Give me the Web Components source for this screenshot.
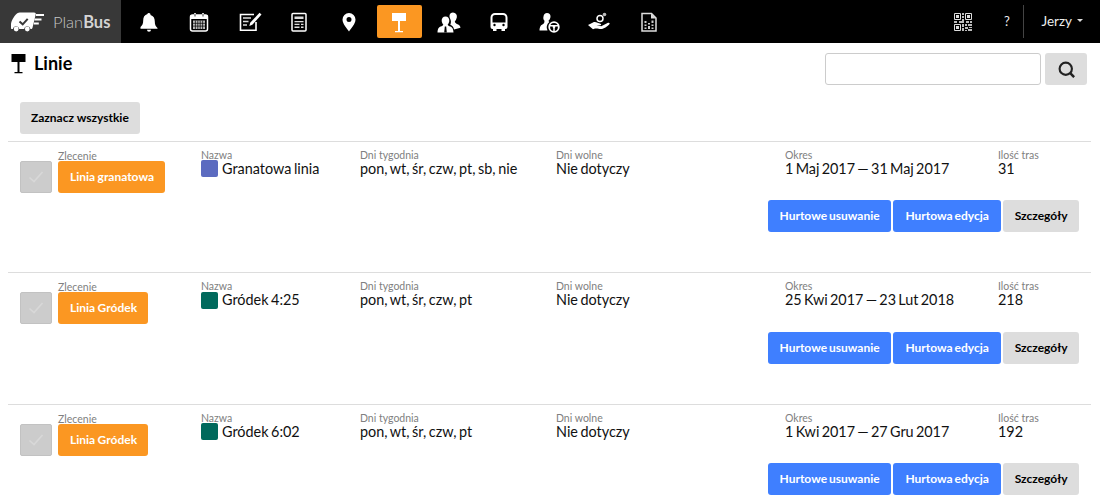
<!DOCTYPE html>
<html lang="pl"><head><meta charset="utf-8"><title>Linie</title>
<style>
html,body{margin:0;padding:0;background:#fff;font-family:Lato,"Liberation Sans",sans-serif;color:#000}
</style></head><body>
<pb-topbar></pb-topbar>
<pb-page-header></pb-page-header>
<pb-toolbar><pb-btn kind="gray" style="word-spacing:0;padding:0 11px">Zaznacz wszystkie</pb-btn></pb-toolbar>
<pb-list>
<pb-line order="Linia granatowa" name="Granatowa linia" color="#5c6bc0" days="pon, wt, śr, czw, pt, sb, nie" off="Nie dotyczy" period="1 Maj 2017 — 31 Maj 2017" count="31"></pb-line>
<pb-line order="Linia Gródek" name="Gródek 4:25" color="#00695c" days="pon, wt, śr, czw, pt" off="Nie dotyczy" period="25 Kwi 2017 — 23 Lut 2018" count="218"></pb-line>
<pb-line order="Linia Gródek" name="Gródek 6:02" color="#00695c" days="pon, wt, śr, czw, pt" off="Nie dotyczy" period="1 Kwi 2017 — 27 Gru 2017" count="192"></pb-line>
</pb-list>
<script>
const SIGN='<path fill="currentColor" d="M3 1h14v8H3zM9 9h2v10H9zM6 19h8v1.300H6z"/>';
const ICONS={
bell:'<path fill="#fff" d="M10 1a1.500 1.500 0 0 1 1.500 1.500v.6c3 .8 4.300 3.300 4.300 6.400 0 3.500 1 5 2.700 6.500v.8H1.500V15c1.700-1.500 2.700-3 2.700-6.500 0-3.100 1.300-5.600 4.300-6.400v-.6A1.500 1.500 0 0 1 10 1zM8 17.800h4a2 2 0 0 1-4 0z"/>',
cal:'<rect x="1.500" y="3" width="17" height="16" rx="2" fill="none" stroke="#fff" stroke-width="1.500"/><path fill="#fff" d="M1.500 3h17v4h-17z"/><path stroke="#fff" stroke-width="2" d="M6 1v3M14 1v3"/><path stroke="#000" stroke-width=".8" d="M6 1.500v3M14 1.500v3"/><path fill="#bbb" d="M4 8.500h12v8.500H4z"/><path stroke="#000" stroke-width=".7" d="M6.400 8.500v8.500M8.800 8.500v8.500M11.200 8.500v8.500M13.600 8.500v8.500M4 11.300h12M4 14.100h12"/>',
edit:'<path fill="none" stroke="#fff" stroke-width="1.600" d="M17 10v8.200H1.500V2.500H15"/><path stroke="#ddd" stroke-width="1.500" d="M4 6h8M4 9.500h5.500M4 13h4"/><path fill="#fff" d="M20.500.8l2 1.800-9.200 10.200-3 1.200.9-3.200z"/>',
doc:'<rect x="3" y="1.500" width="14" height="17.500" rx="1" fill="none" stroke="#fff" stroke-width="1.500"/><path fill="#ddd" d="M5.500 4.500h9v2.600h-9zM5.500 9h9v1.300h-9zM5.500 11.800h5v1.300h-5zM12 11.800h2.500v1.300H12zM5.500 14.600h5v1.300h-5zM12 14.600h2.500v1.300H12z"/>',
pin:'<path fill="#fff" fill-rule="evenodd" d="M10 1a6.500 6.500 0 0 1 6.500 6.500C16.500 12 12 16.500 10 19.500 8 16.500 3.500 12 3.500 7.500A6.500 6.500 0 0 1 10 1zm0 4a2.500 2.500 0 1 0 0 5 2.500 2.500 0 0 0 0-5z"/>',
sign:SIGN,
people:'<path fill="#fff" d="M14 .5a4 4 0 0 1 3.800 5c-.5 2-1.200 3-2 4 .2 1.400 1.200 2 2.700 2.700 1.700.8 2.700 1.500 3 3.500l-6.500 1.800c-.4-2.400-1.700-3.600-3.700-4.700.9-1.900.8-4 0-5.800C10 4.800 10 .5 14 .5zM6.500 4.500c2.500 0 4 1.900 3.800 4.400-.1 1.600-.9 2.700-1.600 3.600.2 1.100 1.300 1.500 2.600 2.100 2 .9 2.900 2 3.200 5.900H-1.500c.3-3.900 1.200-5 3.200-5.900 1.300-.6 2.400-1 2.600-2.100-.7-.9-1.500-2-1.600-3.600-.2-2.500 1.300-4.400 3.800-4.400z"/><path fill="#000" d="M5.800 14.500h1.400l.6 6H5.200z"/>',
bus:'<path fill="none" stroke="#fff" stroke-width="2" d="M6 2h8a3.500 3.500 0 0 1 3.500 3.500V15a1 1 0 0 1-1 1h-13a1 1 0 0 1-1-1V5.500A3.500 3.500 0 0 1 6 2z"/><path fill="#fff" d="M3 10.500h14V15H3zM4 16h3.500v3H4zM12.500 16H16v3h-3.500z"/><circle cx="5.500" cy="13" r="1.200"/><circle cx="14.500" cy="13" r="1.200"/>',
driver:'<path fill="#fff" d="M8 1a3.500 3.500 0 0 1 3.500 3.500c0 2-1 3.200-2 4.200.1.700.4 1.100.8 1.400A6.500 6.500 0 0 0 8.500 18.500H.5c.2-3.900 1.400-5.200 3.200-6.200 1.100-.6 1.700-1.200 1.800-3.600-1-1-1.500-2.200-1-4.200C4.800 2.500 6 1 8 1z"/><circle cx="15" cy="15" r="4.800" fill="none" stroke="#fff" stroke-width="1.800"/><circle cx="15" cy="14.700" r="1.400" fill="#fff"/><path stroke="#fff" stroke-width="1.500" d="M10.500 13.800h9M15 15v4.500"/>',
money:'<circle cx="11" cy="6.500" r="3" fill="none" stroke="#fff" stroke-width="1.500"/><circle cx="15.500" cy="2.500" r="1.800" fill="#bbb"/><path fill="#fff" d="M-1 13l5-2.500c1.300-.8 3-.4 4.500.2l3 1c1 .4 .9 1.600-.2 1.500L7.500 13l4.700 1.200L18.500 11c1.700-.7 2.900.4 1.700 1.500-2 1.800-5.200 4.500-8.200 4.500-2 0-3.700-.8-6-.5l-2 .8z"/>',
report:'<path fill="none" stroke="#ddd" stroke-width="1.500" d="M3 1.500h9.500L17 6v13H3z"/><path fill="#ddd" d="M12 1.500L17 6.500h-5z"/><path fill="#ccc" d="M5.500 9h2v2h-2zM5.500 12.500h2v1.500h-2zM5.500 15.500h2V17h-2zM9 11h2v1.500H9zM9 14h2v3H9zM12.500 8.500h2V11h-2zM12.500 12.500h2v1.500h-2zM12.500 15.500h2V17h-2z"/>'
};
const QR=(()=>{let s='';
const f=(x,y)=>s+=`<path fill="none" stroke="#ddd" stroke-width="1" d="M${x+.5} ${y+.5}h6v6h-6z"/><path fill="#ddd" d="M${x+2} ${y+2}h3v3h-3z"/>`;
f(0,0);f(11,0);f(0,11);
s+='<path fill="#bbb" d="M8 0h2v2H8zM8 3h2v2H8zM8 6h2v2H8zM0 8h3v2H0zM5 8h5v2H5zM12 8h3v2h-3zM16 8h2v2h-2zM8 11h2v3H8zM11 11h2v2h-2zM14 11h4v2h-4zM11 14h3v2h-3zM15 14h3v1h-3zM8 15h2v3H8zM11 17h2v1h-2zM14 16h4v2h-4z"/>';
return s})();
function def(name,css,html,init){customElements.define(name,class extends HTMLElement{
connectedCallback(){if(this.shadowRoot)return;const r=this.attachShadow({mode:'open'});
const a=n=>(this.getAttribute(n)||'');r.innerHTML=`<style>${css}</style>`+html(a);init&&init(r,a)}})}

def('pb-nav-icon',`:host{display:flex;width:45px;height:33px;align-items:center;justify-content:center;margin:0 2.500px;border-radius:2px;color:#fff}
:host([active]){background:#fb9722}svg{width:20px;height:20px;overflow:visible;display:block}`,
a=>`<svg viewBox="0 0 20 20" aria-hidden="true">${ICONS[a('icon')]}</svg>`);

def('pb-topbar',`:host{display:flex;height:43px;background:#000;color:#fff;align-items:stretch}
.logo{width:121px;background:#383838;display:flex;align-items:center;box-sizing:border-box;padding-left:11px;flex:none}
.logo svg{width:34px;height:20px;display:block;margin-right:8px}
.logo span{font:300 16.500px/20px Lato,sans-serif;color:#c4c4c4}.logo b{font-weight:700;color:#d4d4d4}
nav{display:flex;align-items:center;margin-left:3px}
.right{margin-left:auto;display:flex;align-items:center;font:13px Lato,sans-serif;color:#ddd}
.qr{width:18px;height:18px;display:block;margin-right:26px}
.help{width:17px;text-align:center;color:#eee;font-size:13px;padding-bottom:2px}
.sep{width:1px;height:33px;background:#444;margin-left:8px}
.user{font-size:13.500px;color:#eee;margin-left:17px;margin-right:17px;display:flex;align-items:center;gap:5px;padding-bottom:2px}
.caret{border:3px solid transparent;border-top:3.500px solid #ddd;border-bottom:0;width:0;height:0}`,
()=>`<div class="logo"><svg viewBox="0 0 34 20" aria-hidden="true"><path fill="#fff" d="M6 1.500C7 .8 8 .5 10 .5h13c1.500 0 2 .7 1.700 2L21.500 15.800c-.2.800-.7 1.200-1.500 1.200h-.5a3.200 3.200 0 0 0-6.300 0H8.300a3.200 3.200 0 0 0-6.300 0H1c-.7 0-1-.4-1-1v-3.500C0 9 3 4 6 1.500z"/><circle cx="5.200" cy="17" r="2.400" fill="#fff"/><circle cx="16.300" cy="17" r="2.400" fill="#fff"/><path fill="none" stroke="#383838" stroke-width="2" d="M8.500 9.500l3.200 2.800 5-5.500"/><path stroke="#fff" stroke-width="1.800" d="M25 3h8M23.500 7.500h7M22.800 11.500h5"/></svg><span>Plan<b>Bus</b></span></div>
<nav>${['bell','cal','edit','doc','pin','sign','people','bus','driver','money','report'].map(i=>`<pb-nav-icon icon="${i}"${i=='sign'?' active':''}></pb-nav-icon>`).join('')}</nav>
<div class="right"><svg class="qr" viewBox="0 0 18 18" aria-hidden="true">${QR}</svg><span class="help">?</span><span class="sep"></span><span class="user">Jerzy<i class="caret"></i></span></div>`);

def('pb-page-header',`:host{display:flex;justify-content:space-between;align-items:flex-start;padding:9px 13px 0 11px;height:50px;box-sizing:content-box}
h1{margin:0;font:700 18px/22px Lato,sans-serif;display:flex;align-items:center;gap:8px;color:#000}
h1 svg{width:15px;height:20px;display:block;color:#000;margin-top:1px}
.s{display:flex;gap:4px;margin-top:1px}
input{width:216px;height:32px;box-sizing:border-box;border:1px solid #ccc;border-radius:3px;padding:0 8px;outline:0;background:#fff}
button{width:42px;height:32px;border:0;background:#ddd;border-radius:3px;padding:0;display:flex;align-items:center;justify-content:center}
button svg{width:17px;height:17px;display:block}`,
()=>`<h1><svg viewBox="2.500 1 15 20" aria-hidden="true">${SIGN}</svg>Linie</h1>
<div class="s"><input aria-label="Szukaj"><button aria-label="Szukaj"><svg viewBox="0 0 16 16"><circle cx="7.300" cy="7.300" r="5.800" fill="none" stroke="#222" stroke-width="2"/><path stroke="#222" stroke-width="2.400" d="M11.500 11.500l3.700 3.700"/></svg></button></div>`);

def('pb-btn',`:host{display:inline-flex;align-items:center;justify-content:center;height:32px;padding:0 11.500px;border-radius:3px;font:700 12px/1 Lato,sans-serif;white-space:nowrap;box-sizing:border-box;flex:none;word-spacing:-1px}
:host([kind=gray]){background:#ddd;color:#000}:host([kind=blue]){background:#3f7fff;color:#fff}:host([kind=orange]){background:#fb9722;color:#fff;word-spacing:-.5px;padding:0 11px 0 12px}`,
()=>`<slot></slot>`);

def('pb-toolbar',`:host{display:block;padding:0 0 6px 20px;height:32.800px}`,()=>`<slot></slot>`);
def('pb-list',`:host{display:block;margin:0 9px 0 8px}`,()=>`<slot></slot>`);

def('pb-field',`:host{display:block;font:14.400px/18px Lato,sans-serif;color:#111;white-space:nowrap;word-spacing:-1.100px}
.l{display:block;font:10.500px/11px Lato,sans-serif;color:#808080;word-spacing:0;padding-top:1px;margin-bottom:-1px}
.v{display:flex;align-items:center;gap:4px;height:18px}
i{width:17px;height:17px;border-radius:2px;display:block;flex:none}`,
a=>`<span class="l">${a('label')}</span><span class="v">${a('color')?`<i style="background:${a('color')}"></i>`:''}<span>${a('value')}</span></span>`);

def('pb-line',`:host{display:block;height:131.500px;border-top:1px solid #ddd;box-sizing:border-box;padding-top:7px}
.g{display:grid;grid-template-columns:181px 159px 196px 229px 213px 1fr;padding-left:12px}
.o{display:flex;align-items:flex-end;height:44px}
.o .col{margin-left:6px}
.o .cap{display:block;font:10.500px/11px Lato,sans-serif;color:#808080;padding-top:1px;margin-bottom:-1px}
.c{width:32px;height:32px;box-sizing:border-box;background:#ccc;border:1px solid #c2c2c2;border-radius:2px;display:flex;align-items:center;justify-content:center}
.c svg{width:18px;height:18px}
.a{display:flex;justify-content:flex-end;gap:2px;margin:7.500px 12px 0 0}
.p{word-spacing:-1.400px}`,
a=>`<div class="g"><div class="o"><span class="c"><svg viewBox="0 0 18 18" aria-hidden="true"><path fill="none" stroke="#d8d8d8" stroke-width="1.600" d="M2.500 9.500l4.500 4L15.500 4"/></svg></span><div class="col"><span class="cap">Zlecenie</span><pb-btn kind="orange">${a('order')}</pb-btn></div></div>
<pb-field label="Nazwa" value="${a('name')}" color="${a('color')}"></pb-field>
<pb-field label="Dni tygodnia" value="${a('days')}"></pb-field>
<pb-field label="Dni wolne" value="${a('off')}"></pb-field>
<pb-field class="p" label="Okres" value="${a('period')}"></pb-field>
<pb-field label="Ilość tras" value="${a('count')}"></pb-field></div>
<div class="a"><pb-btn kind="blue">Hurtowe usuwanie</pb-btn><pb-btn kind="blue" style="min-width:108px">Hurtowa edycja</pb-btn><pb-btn kind="gray">Szczegóły</pb-btn></div>`);
</script>
</body></html>
